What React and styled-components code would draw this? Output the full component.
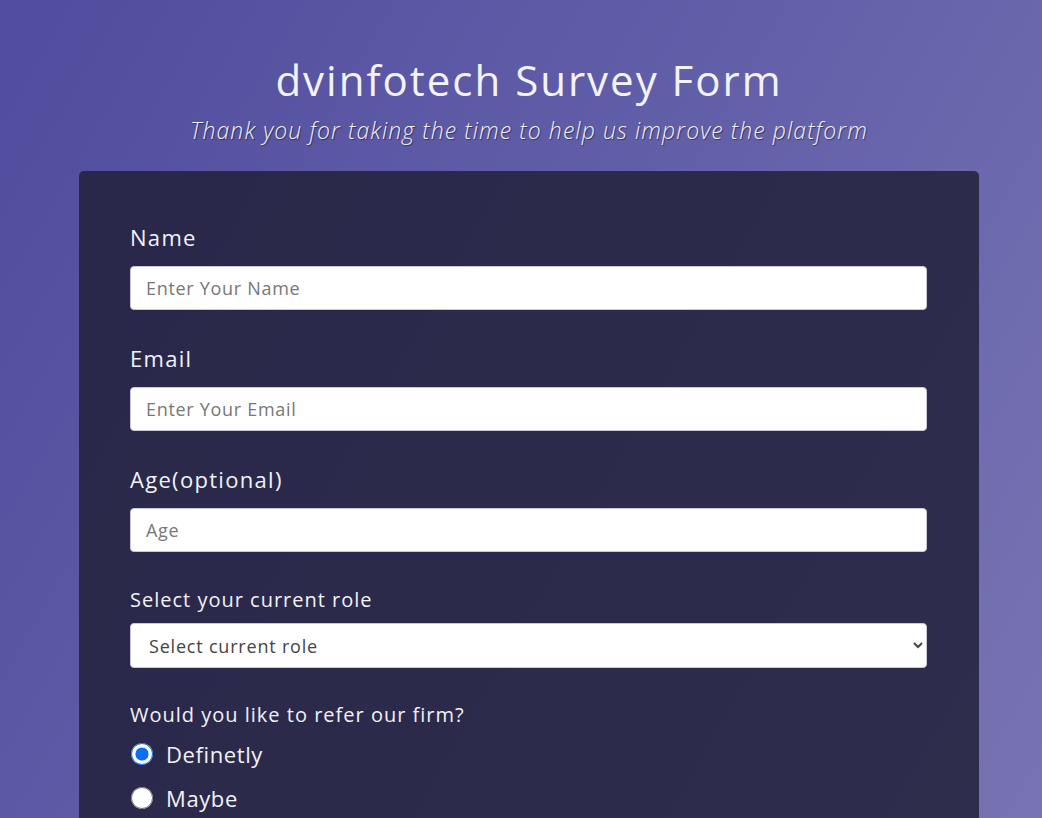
import styled, { createGlobalStyle } from "styled-components";

const GlobalStyle = createGlobalStyle`
  * { box-sizing: border-box; }
  html, body {
    margin: 0;
    padding: 0;
  }
  body {
    min-height: 100vh;
    font-family: "Open Sans", "Liberation Sans", sans-serif;
    background: linear-gradient(120deg, #504c9e 0%, #6461aa 55%, #7874b3 100%);
    background-attachment: fixed;
    color: #f1f1f5;
  }
`;

export default function App() {
  return (
    <>
      <GlobalStyle />
      <Page>
        <Header>
          <Title>dvinfotech Survey Form</Title>
          <Description>
            Thank you for taking the time to help us improve the platform
          </Description>
        </Header>

        <Card>
          <Group>
            <Label htmlFor="name">Name</Label>
            <Input id="name" type="text" placeholder="Enter Your Name" />
          </Group>

          <Group>
            <Label htmlFor="email">Email</Label>
            <Input id="email" type="email" placeholder="Enter Your Email" />
          </Group>

          <Group>
            <Label htmlFor="age">Age(optional)</Label>
            <Input id="age" type="number" placeholder="Age" />
          </Group>

          <Group $small>
            <SubLabel htmlFor="role">Select your current role</SubLabel>
            <Select id="role" defaultValue="">
              <option value="" disabled>
                Select current role
              </option>
              <option>Student</option>
              <option>Full Time Job</option>
              <option>Full Time Learner</option>
              <option>Prefer not to say</option>
              <option>Other</option>
            </Select>
          </Group>

          <Group $small>
            <SubLabel as="p">Would you like to refer our firm?</SubLabel>
            <RadioList>
              <RadioRow>
                <Radio type="radio" name="refer" defaultChecked />
                Definetly
              </RadioRow>
              <RadioRow>
                <Radio type="radio" name="refer" />
                Maybe
              </RadioRow>
              <RadioRow>
                <Radio type="radio" name="refer" />
                Not sure
              </RadioRow>
            </RadioList>
          </Group>
        </Card>
      </Page>
    </>
  );
}

const Page = styled.main`
  width: 916px;
  margin: 0 auto;
  padding: 52px 0 0 16px;
`;

const Header = styled.header`
  display: flex;
  flex-direction: column;
  align-items: center;
  gap: 7px;
  margin-bottom: 26px;
`;

const Title = styled.h1`
  margin: 0;
  font-size: 42px;
  font-weight: 400;
  line-height: 56px;
  letter-spacing: 2px;
  color: #f3f2f8;
`;

const Description = styled.p`
  margin: 0;
  font-size: 23px;
  font-weight: 300;
  font-style: italic;
  line-height: 30px;
  letter-spacing: 1.1px;
  color: #f1f0f7;
  text-shadow: 1px 1px 1px rgba(0, 0, 0, 0.45);
`;

const Card = styled.form`
  padding: 51px 52px 40px 51px;
  border-radius: 5px;
  background: rgba(34, 33, 59, 0.85);
`;

const Group = styled.div`
  display: flex;
  flex-direction: column;
  gap: ${(p) => (p.$small ? "8px" : "14px")};
  margin-bottom: ${(p) => (p.$small ? "32px" : "33px")};
`;

const Label = styled.label`
  font-size: 22px;
  font-weight: 500;
  line-height: 30px;
  letter-spacing: 1.3px;
  color: #f2f2f6;
`;

const SubLabel = styled.label`
  margin: 0;
  font-size: 20px;
  font-weight: 500;
  line-height: 30px;
  letter-spacing: 1px;
  color: #f2f2f6;
`;

const Input = styled.input`
  width: 100%;
  height: 44px;
  padding: 0 15px;
  border: 1px solid #c8c9d4;
  border-radius: 4px;
  background: #fff;
  font-family: inherit;
  font-size: 18px;
  letter-spacing: 0.7px;
  color: #333;

  &::placeholder {
    color: #777;
  }
`;

const Select = styled.select`
  width: 100%;
  height: 45px;
  padding: 0 14px;
  border: 1px solid #c8c9d4;
  border-radius: 4px;
  background: #fff;
  font-family: inherit;
  font-size: 18px;
  letter-spacing: 0.8px;
  color: #444;
`;

const RadioList = styled.div`
  display: flex;
  flex-direction: column;
  gap: 8px;
  margin-top: -2px;
`;

const RadioRow = styled.label`
  display: flex;
  align-items: center;
  gap: 13px;
  font-size: 22px;
  font-weight: 500;
  line-height: 36px;
  letter-spacing: 0.6px;
  color: #f2f2f6;
`;

const Radio = styled.input`
  width: 22px;
  height: 22px;
  margin: 0 0 0 1px;
  accent-color: #0b6ff2;
`;
